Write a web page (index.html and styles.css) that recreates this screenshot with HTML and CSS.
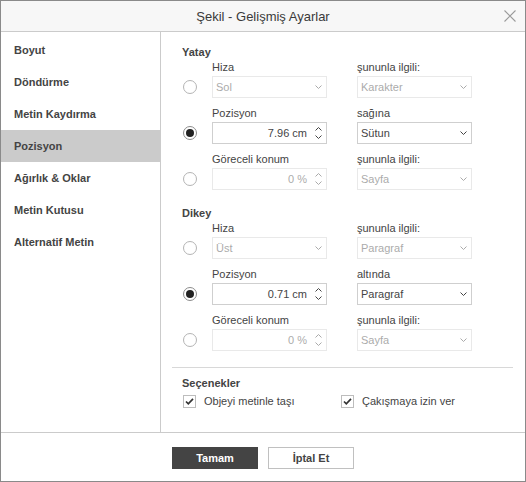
FILE: index.html
```html
<!DOCTYPE html>
<html lang="tr">
<head>
<meta charset="utf-8">
<title>Şekil - Gelişmiş Ayarlar</title>
<link rel="stylesheet" href="styles.css">
</head>
<body>
<div class="dialog">
  <div class="header">
    <span></span>
    <span class="title">Şekil - Gelişmiş Ayarlar</span>
    <span class="close"><svg width="12" height="12" viewBox="0 0 12 12"><path d="M0.5 0.5 L11.5 11.5 M11.5 0.5 L0.5 11.5" stroke="#9a9a9a" stroke-width="1.1" fill="none"/></svg></span>
  </div>
  <div class="main">
    <ul class="sidebar">
      <li>Boyut</li>
      <li>Döndürme</li>
      <li>Metin Kaydırma</li>
      <li class="active">Pozisyon</li>
      <li>Ağırlık &amp; Oklar</li>
      <li>Metin Kutusu</li>
      <li>Alternatif Metin</li>
    </ul>
    <div class="content">
      <div class="section">
        <div class="section-title">Yatay</div>
        <div class="row">
          <div class="radio-cell"><span class="radio"></span></div>
          <div class="field"><label>Hiza</label>
            <div class="select disabled"><span>Sol</span><svg class="chev" width="7" height="4" viewBox="0 0 7 4"><path d="M0.5 0.5 L3.5 3.5 L6.5 0.5" stroke="#444" fill="none"/></svg></div></div>
          <div class="field"><label>şununla ilgili:</label>
            <div class="select disabled"><span>Karakter</span><svg class="chev" width="7" height="4" viewBox="0 0 7 4"><path d="M0.5 0.5 L3.5 3.5 L6.5 0.5" stroke="#444" fill="none"/></svg></div></div>
        </div>
        <div class="row">
          <div class="radio-cell"><span class="radio checked"></span></div>
          <div class="field"><label>Pozisyon</label>
            <div class="spin"><span class="value">7.96 cm</span><span class="arrows"><svg width="7" height="4" viewBox="0 0 7 4"><path d="M0.5 3.5 L3.5 0.5 L6.5 3.5" stroke="#444" fill="none"/></svg><svg width="7" height="4" viewBox="0 0 7 4"><path d="M0.5 0.5 L3.5 3.5 L6.5 0.5" stroke="#444" fill="none"/></svg></span></div></div>
          <div class="field"><label>sağına</label>
            <div class="select"><span>Sütun</span><svg class="chev" width="7" height="4" viewBox="0 0 7 4"><path d="M0.5 0.5 L3.5 3.5 L6.5 0.5" stroke="#444" fill="none"/></svg></div></div>
        </div>
        <div class="row">
          <div class="radio-cell"><span class="radio"></span></div>
          <div class="field"><label>Göreceli konum</label>
            <div class="spin disabled"><span class="value">0 %</span><span class="arrows"><svg width="7" height="4" viewBox="0 0 7 4"><path d="M0.5 3.5 L3.5 0.5 L6.5 3.5" stroke="#444" fill="none"/></svg><svg width="7" height="4" viewBox="0 0 7 4"><path d="M0.5 0.5 L3.5 3.5 L6.5 0.5" stroke="#444" fill="none"/></svg></span></div></div>
          <div class="field"><label>şununla ilgili:</label>
            <div class="select disabled"><span>Sayfa</span><svg class="chev" width="7" height="4" viewBox="0 0 7 4"><path d="M0.5 0.5 L3.5 3.5 L6.5 0.5" stroke="#444" fill="none"/></svg></div></div>
        </div>
      </div>
      <div class="section">
        <div class="section-title">Dikey</div>
        <div class="row">
          <div class="radio-cell"><span class="radio"></span></div>
          <div class="field"><label>Hiza</label>
            <div class="select disabled"><span>Üst</span><svg class="chev" width="7" height="4" viewBox="0 0 7 4"><path d="M0.5 0.5 L3.5 3.5 L6.5 0.5" stroke="#444" fill="none"/></svg></div></div>
          <div class="field"><label>şununla ilgili:</label>
            <div class="select disabled"><span>Paragraf</span><svg class="chev" width="7" height="4" viewBox="0 0 7 4"><path d="M0.5 0.5 L3.5 3.5 L6.5 0.5" stroke="#444" fill="none"/></svg></div></div>
        </div>
        <div class="row">
          <div class="radio-cell"><span class="radio checked"></span></div>
          <div class="field"><label>Pozisyon</label>
            <div class="spin"><span class="value">0.71 cm</span><span class="arrows"><svg width="7" height="4" viewBox="0 0 7 4"><path d="M0.5 3.5 L3.5 0.5 L6.5 3.5" stroke="#444" fill="none"/></svg><svg width="7" height="4" viewBox="0 0 7 4"><path d="M0.5 0.5 L3.5 3.5 L6.5 0.5" stroke="#444" fill="none"/></svg></span></div></div>
          <div class="field"><label>altında</label>
            <div class="select"><span>Paragraf</span><svg class="chev" width="7" height="4" viewBox="0 0 7 4"><path d="M0.5 0.5 L3.5 3.5 L6.5 0.5" stroke="#444" fill="none"/></svg></div></div>
        </div>
        <div class="row">
          <div class="radio-cell"><span class="radio"></span></div>
          <div class="field"><label>Göreceli konum</label>
            <div class="spin disabled"><span class="value">0 %</span><span class="arrows"><svg width="7" height="4" viewBox="0 0 7 4"><path d="M0.5 3.5 L3.5 0.5 L6.5 3.5" stroke="#444" fill="none"/></svg><svg width="7" height="4" viewBox="0 0 7 4"><path d="M0.5 0.5 L3.5 3.5 L6.5 0.5" stroke="#444" fill="none"/></svg></span></div></div>
          <div class="field"><label>şununla ilgili:</label>
            <div class="select disabled"><span>Sayfa</span><svg class="chev" width="7" height="4" viewBox="0 0 7 4"><path d="M0.5 0.5 L3.5 3.5 L6.5 0.5" stroke="#444" fill="none"/></svg></div></div>
        </div>
      </div>
      <div class="sep"></div>
      <div class="options">
        <div class="section-title">Seçenekler</div>
        <div class="checks">
          <div class="check-item"><span class="checkbox"><svg width="11" height="11" viewBox="0 0 11 11"><path d="M2 5.5 L4.3 7.8 L9 2.8" stroke="#333" stroke-width="1.7" fill="none"/></svg></span><span>Objeyi metinle taşı</span></div>
          <div class="check-item"><span class="checkbox"><svg width="11" height="11" viewBox="0 0 11 11"><path d="M2 5.5 L4.3 7.8 L9 2.8" stroke="#333" stroke-width="1.7" fill="none"/></svg></span><span>Çakışmaya izin ver</span></div>
        </div>
      </div>
    </div>
  </div>
  <div class="footer">
    <button class="btn primary">Tamam</button>
    <button class="btn">İptal Et</button>
  </div>
</div>
</body>
</html>
```
FILE: styles.css
```css
* { box-sizing: border-box; }
html, body { margin: 0; padding: 0; background: #fff; }
body {
  font-family: Arial, "Liberation Sans", sans-serif;
  font-size: 11px;
  color: #444;
}
.dialog {
  width: 526px;
  height: 482px;
  border: 1px solid #8a8a8a;
  display: flex;
  flex-direction: column;
  background: #fff;
}
.header {
  height: 31px;
  flex: none;
  background: #f7f7f7;
  border-bottom: 1px solid #cbcbcb;
  display: grid;
  grid-template-columns: 1fr auto 1fr;
  align-items: center;
}
.title {
  font-size: 13px;
  color: #3a3a3a;
}
.close {
  justify-self: end;
  margin-right: 9px;
  display: flex;
}
.main {
  height: 401px;
  flex: none;
  display: flex;
  border-bottom: 1px solid #cbcbcb;
}
.sidebar {
  list-style: none;
  margin: 0;
  padding: 2px 0 0 0;
  width: 160px;
  border-right: 1px solid #cbcbcb;
  flex: none;
}
.sidebar li {
  height: 32px;
  line-height: 32px;
  padding-left: 13px;
  font-weight: bold;
  color: #444;
}
.sidebar li.active {
  background: #cbcbcb;
}
.content {
  flex: 1;
  padding: 13px 12px 0 21px;
}
.section + .section { margin-top: 16px; }
.section-title {
  font-weight: bold;
  line-height: 14px;
  color: #444;
}
.row {
  display: flex;
  align-items: flex-end;
  margin-bottom: 7px;
}
.radio-cell {
  width: 30px;
  height: 22px;
  display: flex;
  align-items: center;
  padding-left: 1px;
  flex: none;
}
.radio {
  width: 14px;
  height: 14px;
  border: 1px solid #b4b4b4;
  border-radius: 50%;
  display: flex;
  align-items: center;
  justify-content: center;
  background: #fff;
}
.radio.checked { border-color: #8c8c8c; }
.radio.checked::after {
  content: "";
  width: 8px;
  height: 8px;
  border-radius: 50%;
  background: #222;
}
.field {
  width: 115px;
  flex: none;
}
.field + .field { margin-left: 30px; }
.field label {
  display: block;
  line-height: 16px;
  margin-bottom: 1px;
  white-space: nowrap;
  color: #444;
}
.select, .spin {
  height: 22px;
  border: 1px solid #cfcfcf;
  display: flex;
  align-items: center;
  background: #fff;
  color: #444;
}
.select {
  padding: 0 4px 0 3px;
  justify-content: space-between;
}
.spin {
  padding: 0 4px 0 3px;
}
.spin .value {
  flex: 1;
  text-align: right;
}
.arrows {
  display: flex;
  flex-direction: column;
  gap: 4px;
  margin-left: 8px;
}
.arrows svg, .chev { display: block; }
.disabled { opacity: 0.45; }
.sep {
  height: 1px;
  background: #d8d8d8;
  margin: 16px 0 8px -10px;
}
.checks {
  display: grid;
  grid-template-columns: 158px auto;
  margin-top: 3px;
}
.check-item {
  display: flex;
  align-items: center;
  height: 16px;
  gap: 8px;
  padding-left: 1px;
}
.checkbox {
  width: 13px;
  height: 13px;
  border: 1px solid #bdbdbd;
  display: flex;
  align-items: center;
  justify-content: center;
  background: #fff;
}
.footer {
  flex: 1;
  display: flex;
  justify-content: center;
  align-items: flex-start;
  padding-top: 14px;
  gap: 10px;
}
.btn {
  width: 86px;
  height: 22px;
  font-family: Arial, "Liberation Sans", sans-serif;
  font-size: 11px;
  font-weight: bold;
  border: 1px solid #c0c0c0;
  background: #fff;
  color: #444;
  padding: 0;
}
.btn.primary {
  background: #444;
  border-color: #444;
  color: #fff;
}
```
